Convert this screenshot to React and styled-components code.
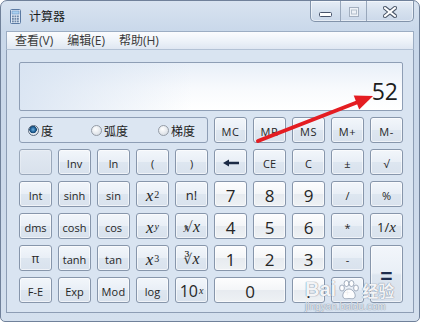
import React from 'react'
import styled, { createGlobalStyle } from 'styled-components'

const GlobalStyle = createGlobalStyle`
  html, body { margin: 0; padding: 0; background: #fff; overflow: hidden; }
  body { font-family: "Open Sans", "Noto Sans CJK SC", sans-serif; }
`;

const Window = styled.div`
  position: relative;
  box-sizing: border-box;
  width: 420px;
  height: 322px;
  border: 1px solid #70819a;
  border-radius: 7px 7px 5px 5px;
  background: linear-gradient(to bottom, #d8e3f0, #c9d8ea 30px, #ccd9ea 60%, #d4e0ee);
  padding: 0 5px 8px;
  display: flex;
  flex-direction: column;
  overflow: hidden;
`;

const TitleBar = styled.div`
  height: 30px;
  flex: none;
  display: flex;
  align-items: flex-start;
`;

const AppIcon = styled.svg`
  flex: none;
  margin: 8px 0 0 4px;
`;

const Title = styled.span`
  margin: 7px 0 0 8px;
  font-family: "Noto Sans CJK SC", sans-serif;
  font-size: 12px;
  line-height: 16px;
  color: #1b1b1b;
`;

const Controls = styled.div`
  margin-left: auto;
  display: flex;
  height: 20px;
  border: 1px solid #8293aa;
  border-top: none;
  border-radius: 0 0 5px 5px;
  overflow: hidden;
  background: linear-gradient(#e6edf6, #d6e1ee 50%, #cbd8e9);
  box-shadow: inset 0 0 0 1px rgba(255,255,255,.5);
`;

const Ctrl = styled.div`
  width: ${p => p.$w}px;
  box-sizing: border-box;
  display: flex;
  justify-content: center;
  align-items: flex-end;
  padding-bottom: ${p => p.$pb}px;
  & + & { border-left: 1px solid #98a7bb; }
`;

const MenuBar = styled.div`
  height: 19px;
  flex: none;
  box-sizing: border-box;
  border: 1px solid #9cadc3;
  border-bottom-color: #b3c2d5;
  background: linear-gradient(#fbfcfe, #eef3f9 50%, #dfe7f2);
  display: flex;
  align-items: center;
  gap: 14px;
  padding-left: 8px;
`;

const MenuItem = styled.span`
  font-family: "Open Sans", "Noto Sans CJK SC", sans-serif;
  font-size: 12px;
  line-height: 17px;
  color: #3a3a3a;
`;

const Client = styled.div`
  flex: 1;
  background: #d9e4f1;
  border: 1px solid #8d9db4;
  border-top: none;
  padding: 12px 10px 9px 12px;
`;

const Display = styled.div`
  height: 49px;
  box-sizing: border-box;
  border: 1px solid #8e9eb5;
  border-radius: 2px;
  background:
    linear-gradient(to right, rgba(214,226,241,.85), rgba(255,255,255,0) 45%),
    linear-gradient(#e8eff8, #f8fafd 55%, #ffffff);
  display: flex;
  justify-content: flex-end;
  align-items: flex-end;
  padding: 0 4px 7px 0;
  font-family: "Open Sans", sans-serif;
  font-size: 23px;
  line-height: 23px;
  color: #1c1c1c;
  margin-bottom: 6px;
`;

const Pad = styled.div`
  display: grid;
  grid-template-columns: repeat(10, 33px);
  grid-auto-rows: 26px;
  gap: 6px;
`;

const AngleBox = styled.div`
  grid-column: span 5;
  box-sizing: border-box;
  border: 1px solid #8e9eb5;
  border-radius: 3px;
  background: #dce6f2;
  display: grid;
  grid-template-columns: 63px 67px 1fr;
  align-items: center;
  padding-left: 8px;
`;

const Radio = styled.label`
  display: flex;
  align-items: center;
  gap: 2px;
  font-family: "Noto Sans CJK SC", sans-serif;
  font-size: 12px;
  color: #222;
`;

const Dot = styled.span`
  width: 11px;
  height: 11px;
  box-sizing: border-box;
  border-radius: 50%;
  border: 1px solid ${p => (p.$on ? '#5c6b7e' : '#959ca6')};
  background: ${p => (p.$on
    ? 'radial-gradient(circle at 45% 40%, #6fb1e0 0, #1f5f95 2.5px, #14456f 3.5px, #e9eef4 4px, #c9d1db 100%)'
    : 'radial-gradient(circle at 40% 35%, #ffffff, #e2e6eb 60%, #cfd5dd)')};
`;

const fnBg = 'linear-gradient(#f2f6fb, #e9eff6 48%, #dde6f0 52%, #d9e2ed)';
const numBg = 'linear-gradient(#fdfdfe, #f4f6f8 48%, #e7ebf0 52%, #eef1f4)';
const blankBg = 'linear-gradient(#e2e9f2, #d8e1ec)';

const Key = styled.div`
  grid-column: span ${p => p.$cols || 1};
  grid-row: span ${p => p.$rows || 1};
  box-sizing: border-box;
  border: 1px solid ${p => (p.$blank ? '#9aa8ba' : '#8796ab')};
  border-radius: 3px;
  background: ${p => (p.$num ? numBg : p.$blank ? blankBg : fnBg)};
  box-shadow: inset 0 0 0 1px rgba(255,255,255,${p => (p.$blank ? 0.25 : 0.6)});
  font-family: "Open Sans", sans-serif;
  font-size: ${p => p.$size || 11}px;
  letter-spacing: ${p => p.$ls || 0}px;
  color: #262626;
  display: flex;
  align-items: center;
  justify-content: center;
  padding-top: 2px;
  line-height: 1;
  white-space: nowrap;
`;

const Ital = styled.span`
  font-family: "Liberation Serif", serif;
  font-style: italic;
  font-size: ${p => p.$s || 17}px;
`;

const Sup = styled.sup`
  font-family: "Liberation Serif", serif;
  font-style: ${p => (p.$i ? 'italic' : 'normal')};
  font-size: ${p => p.$s || 10}px;
  vertical-align: ${p => p.$up || 7}px;
  margin-left: 1px;
`;

const Root = styled.span`
  font-family: "DejaVu Serif", serif;
  font-size: 14px;
  color: #333;
`;

const Equals = styled.span`
  font-family: "Liberation Sans", sans-serif;
  font-weight: bold;
  font-size: 21px;
  color: #1e2d4d;
`;

const Overlay = styled.svg`
  position: absolute;
  left: -1px;
  top: -1px;
  pointer-events: none;
`;

const Watermark = styled.div`
  position: absolute;
  left: 304px;
  top: 279px;
  pointer-events: none;
  color: rgba(255,255,255,.92);
  text-shadow: 0 0 1px #7f8ea3, 0 0 1px #7f8ea3;
  display: flex;
  flex-direction: column;
`;

const MarkRow = styled.div`
  display: flex;
  align-items: center;
  height: 19px;
`;

const MarkBai = styled.span`
  font-family: "Liberation Sans", sans-serif;
  font-weight: bold;
  font-size: 20px;
  letter-spacing: 0;
`;

const MarkCn = styled.span`
  font-family: "Noto Sans CJK SC", sans-serif;
  font-weight: bold;
  font-size: 16px;
`;

const MarkUrl = styled.span`
  font-family: "Liberation Sans", sans-serif;
  font-size: 10px;
  margin-top: 2px;
  color: rgba(255,255,255,.8);
`;

const BackArrow = () => (
  <svg width="16" height="8" viewBox="0 0 16 8">
    <path d="M5 4 H16" stroke="#1b2a45" strokeWidth="2.4" />
    <polygon points="0,4 6,0.5 6,7.5" fill="#1b2a45" />
  </svg>
);

const sciKeys = [
  [{ blank: true }, { t: 'Inv' }, { t: 'ln' }, { t: '(' }, { t: ')' }],
  [{ t: 'Int' }, { t: 'sinh' }, { t: 'sin' }, { x: <><Ital>x</Ital><Sup>2</Sup></> }, { t: 'n!', size: 13 }],
  [{ t: 'dms' }, { t: 'cosh' }, { t: 'cos' }, { x: <><Ital>x</Ital><Sup $i>y</Sup></> },
    { x: <><Sup $i $s={9} $up={5}>y</Sup><Root style={{ marginLeft: -4 }}>√</Root><Ital $s={16}> x</Ital></> }],
  [{ t: 'π', size: 12 }, { t: 'tanh' }, { t: 'tan' }, { x: <><Ital>x</Ital><Sup>3</Sup></> },
    { x: <><Root>∛</Root><Ital $s={16}> x</Ital></> }],
  [{ t: 'F-E' }, { t: 'Exp' }, { t: 'Mod', ls: 0.3 }, { t: 'log' },
    { x: <><span style={{ fontSize: 16 }}>10</span><Sup $i $s={10} $up={6}>x</Sup></> }],
];

const stdKeys = [
  [{ x: <BackArrow /> }, { t: 'CE' }, { t: 'C' }, { t: '±' }, { t: '√' }],
  [{ t: '7', num: true }, { t: '8', num: true }, { t: '9', num: true }, { t: '/' }, { t: '%' }],
  [{ t: '4', num: true }, { t: '5', num: true }, { t: '6', num: true }, { t: '*' },
    { x: <><span style={{ fontSize: 13 }}>1/</span><Ital $s={15}>x</Ital></> }],
  [{ t: '1', num: true }, { t: '2', num: true }, { t: '3', num: true }, { t: '-' },
    { x: <Equals>=</Equals>, rows: 2 }],
  [{ t: '0', num: true, cols: 2 }, { t: '.', num: true }, { t: '+' }],
];

function renderKey(k, i) {
  return (
    <Key
      key={i}
      $num={k.num}
      $blank={k.blank}
      $cols={k.cols}
      $rows={k.rows}
      $size={k.size || (k.num ? 17 : 11)}
      $ls={k.ls}
    >
      {k.x || k.t}
    </Key>
  );
}

export default function App() {
  const rows = sciKeys.map((r, i) => [...r, ...stdKeys[i]]).flat();
  return (
    <>
      <GlobalStyle />
      <Window>
        <TitleBar>
          <AppIcon width="11" height="15" viewBox="0 0 11 15">
            <rect x="0.5" y="0.5" width="10" height="14" rx="1" fill="#dfe9f5" stroke="#5b7aa3" />
            <rect x="2" y="2" width="7" height="3" fill="#a9d0f0" stroke="#6a8fbf" strokeWidth="0.6" />
            {[0, 1, 2].map(r => [0, 1, 2].map(c => (
              <rect key={`${r}${c}`} x={2 + c * 2.5} y={6.5 + r * 2.5} width="1.8" height="1.8" fill="#6f88a8" />
            )))}
          </AppIcon>
          <Title>计算器</Title>
          <Controls>
            <Ctrl $w={29} $pb={4}>
              <svg width="13" height="5" viewBox="0 0 13 5">
                <rect x="0.5" y="0.5" width="12" height="4" rx="1" fill="#fff" stroke="#47536a" />
              </svg>
            </Ctrl>
            <Ctrl $w={26} $pb={4}>
              <svg width="10" height="10" viewBox="0 0 10 10">
                <rect x="0.5" y="0.5" width="9" height="9" fill="#eef2f7" stroke="#a3afbf" />
                <rect x="2.5" y="3" width="5" height="4" fill="none" stroke="#b4bfcc" />
              </svg>
            </Ctrl>
            <Ctrl $w={47} $pb={3}>
              <svg width="14" height="12" viewBox="0 0 14 12">
                <path d="M2 2 L12 10 M12 2 L2 10" stroke="#4d596b" strokeWidth="4.2" strokeLinecap="square" />
                <path d="M2 2 L12 10 M12 2 L2 10" stroke="#fff" strokeWidth="2" strokeLinecap="square" />
              </svg>
            </Ctrl>
          </Controls>
        </TitleBar>
        <MenuBar>
          <MenuItem>查看(V)</MenuItem>
          <MenuItem>编辑(E)</MenuItem>
          <MenuItem>帮助(H)</MenuItem>
        </MenuBar>
        <Client>
          <Display>52</Display>
          <Pad>
            <AngleBox>
              <Radio><Dot $on />度</Radio>
              <Radio><Dot />弧度</Radio>
              <Radio><Dot />梯度</Radio>
            </AngleBox>
            {['MC', 'MR', 'MS', 'M+', 'M-'].map(m => (
              <Key key={m} $size={11} $ls={0.6}>{m}</Key>
            ))}
            {rows.map(renderKey)}
          </Pad>
        </Client>
        <Watermark>
          <MarkRow>
            <MarkBai>Bai</MarkBai>
            <svg width="24" height="20" viewBox="0 0 24 20" style={{ margin: '0 1px' }}>
              <g fill="rgba(255,255,255,.92)" stroke="#7f8ea3" strokeWidth="0.7">
                <ellipse cx="5" cy="8" rx="2.4" ry="3" />
                <ellipse cx="9.5" cy="3.5" rx="2.4" ry="3" />
                <ellipse cx="14.5" cy="3.5" rx="2.4" ry="3" />
                <ellipse cx="19" cy="8" rx="2.4" ry="3" />
                <path d="M12 9 C8 9 5 14 6 17 C7 19.5 10 18.5 12 18.5 C14 18.5 17 19.5 18 17 C19 14 16 9 12 9 Z" />
              </g>
            </svg>
            <MarkCn>经验</MarkCn>
          </MarkRow>
          <MarkUrl>jingyan.baidu.com</MarkUrl>
        </Watermark>
        <Overlay width="422" height="323" viewBox="0 0 422 323">
          <line x1="258" y1="141" x2="358" y2="102" stroke="#e41d22" strokeWidth="4" strokeLinecap="round" />
          <polygon points="373,96 353.7,95.6 359.2,109.6" fill="#e41d22" />
        </Overlay>
      </Window>
    </>
  );
}
